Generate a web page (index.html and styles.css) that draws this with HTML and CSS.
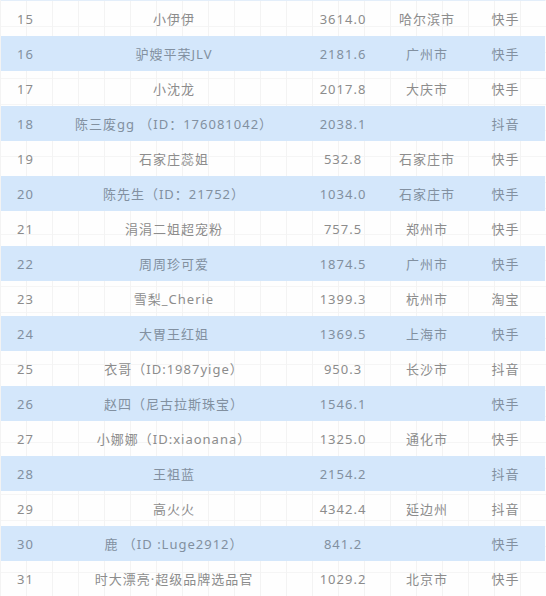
FILE: index.html
```html
<!DOCTYPE html>
<html lang="zh">
<head>
<meta charset="utf-8">
<link rel="stylesheet" href="styles.css">
</head>
<body>
<div class="sheet">
  <div class="row"><span class="c1">15</span><span class="c2">小伊伊</span><span class="c3">3614.0</span><span class="c4">哈尔滨市</span><span class="c5">快手</span></div>
  <div class="row blue"><span class="c1">16</span><span class="c2">驴嫂平荣JLV</span><span class="c3">2181.6</span><span class="c4">广州市</span><span class="c5">快手</span></div>
  <div class="row"><span class="c1">17</span><span class="c2">小沈龙</span><span class="c3">2017.8</span><span class="c4">大庆市</span><span class="c5">快手</span></div>
  <div class="row blue"><span class="c1">18</span><span class="c2">陈三废gg （ID：176081042）</span><span class="c3">2038.1</span><span class="c4"></span><span class="c5">抖音</span></div>
  <div class="row"><span class="c1">19</span><span class="c2">石家庄蕊姐</span><span class="c3">532.8</span><span class="c4">石家庄市</span><span class="c5">快手</span></div>
  <div class="row blue"><span class="c1">20</span><span class="c2">陈先生（ID：21752）</span><span class="c3">1034.0</span><span class="c4">石家庄市</span><span class="c5">快手</span></div>
  <div class="row"><span class="c1">21</span><span class="c2">涓涓二姐超宠粉</span><span class="c3">757.5</span><span class="c4">郑州市</span><span class="c5">快手</span></div>
  <div class="row blue"><span class="c1">22</span><span class="c2">周周珍可爱</span><span class="c3">1874.5</span><span class="c4">广州市</span><span class="c5">快手</span></div>
  <div class="row"><span class="c1">23</span><span class="c2">雪梨_Cherie</span><span class="c3">1399.3</span><span class="c4">杭州市</span><span class="c5">淘宝</span></div>
  <div class="row blue"><span class="c1">24</span><span class="c2">大胃王红姐</span><span class="c3">1369.5</span><span class="c4">上海市</span><span class="c5">快手</span></div>
  <div class="row"><span class="c1">25</span><span class="c2">衣哥（ID:1987yige）</span><span class="c3">950.3</span><span class="c4">长沙市</span><span class="c5">抖音</span></div>
  <div class="row blue"><span class="c1">26</span><span class="c2">赵四（尼古拉斯珠宝）</span><span class="c3">1546.1</span><span class="c4"></span><span class="c5">快手</span></div>
  <div class="row"><span class="c1">27</span><span class="c2">小娜娜（ID:xiaonana）</span><span class="c3">1325.0</span><span class="c4">通化市</span><span class="c5">快手</span></div>
  <div class="row blue"><span class="c1">28</span><span class="c2">王祖蓝</span><span class="c3">2154.2</span><span class="c4"></span><span class="c5">抖音</span></div>
  <div class="row"><span class="c1">29</span><span class="c2">高火火</span><span class="c3">4342.4</span><span class="c4">延边州</span><span class="c5">抖音</span></div>
  <div class="row blue"><span class="c1">30</span><span class="c2">鹿 （ID :Luge2912）</span><span class="c3">841.2</span><span class="c4"></span><span class="c5">快手</span></div>
  <div class="row"><span class="c1">31</span><span class="c2">时大漂亮·超级品牌选品官</span><span class="c3">1029.2</span><span class="c4">北京市</span><span class="c5">快手</span></div>
</div>
</body>
</html>
```

FILE: styles.css
```css
html, body {
  margin: 0;
  padding: 0;
  background: #ffffff;
}
body {
  width: 546px;
  height: 596px;
  overflow: hidden;
  background-color: #fefefe;
  background-image:
    linear-gradient(to right, #f3f3f3 1px, transparent 1px),
    linear-gradient(to bottom, #f5f5f5 1px, transparent 1px);
  background-size: 26px 26px;
  font-family: "Noto Sans", "Noto Sans CJK SC", sans-serif;
  font-size: 13px;
  letter-spacing: 1px;
  color: #8c8c8c;
}
.sheet {
  display: flex;
  flex-direction: column;
  margin-left: 1px;
  width: 544px;
  border-top: 1px solid #e3eefa;
}
.row {
  display: grid;
  grid-template-columns: 49px 248px 90px 78px 79px;
  height: 35px;
  align-items: center;
}
.row.blue {
  background: #d4e7fb;
  color: #8290a0;
}
.row span {
  text-align: center;
  white-space: nowrap;
}
```
